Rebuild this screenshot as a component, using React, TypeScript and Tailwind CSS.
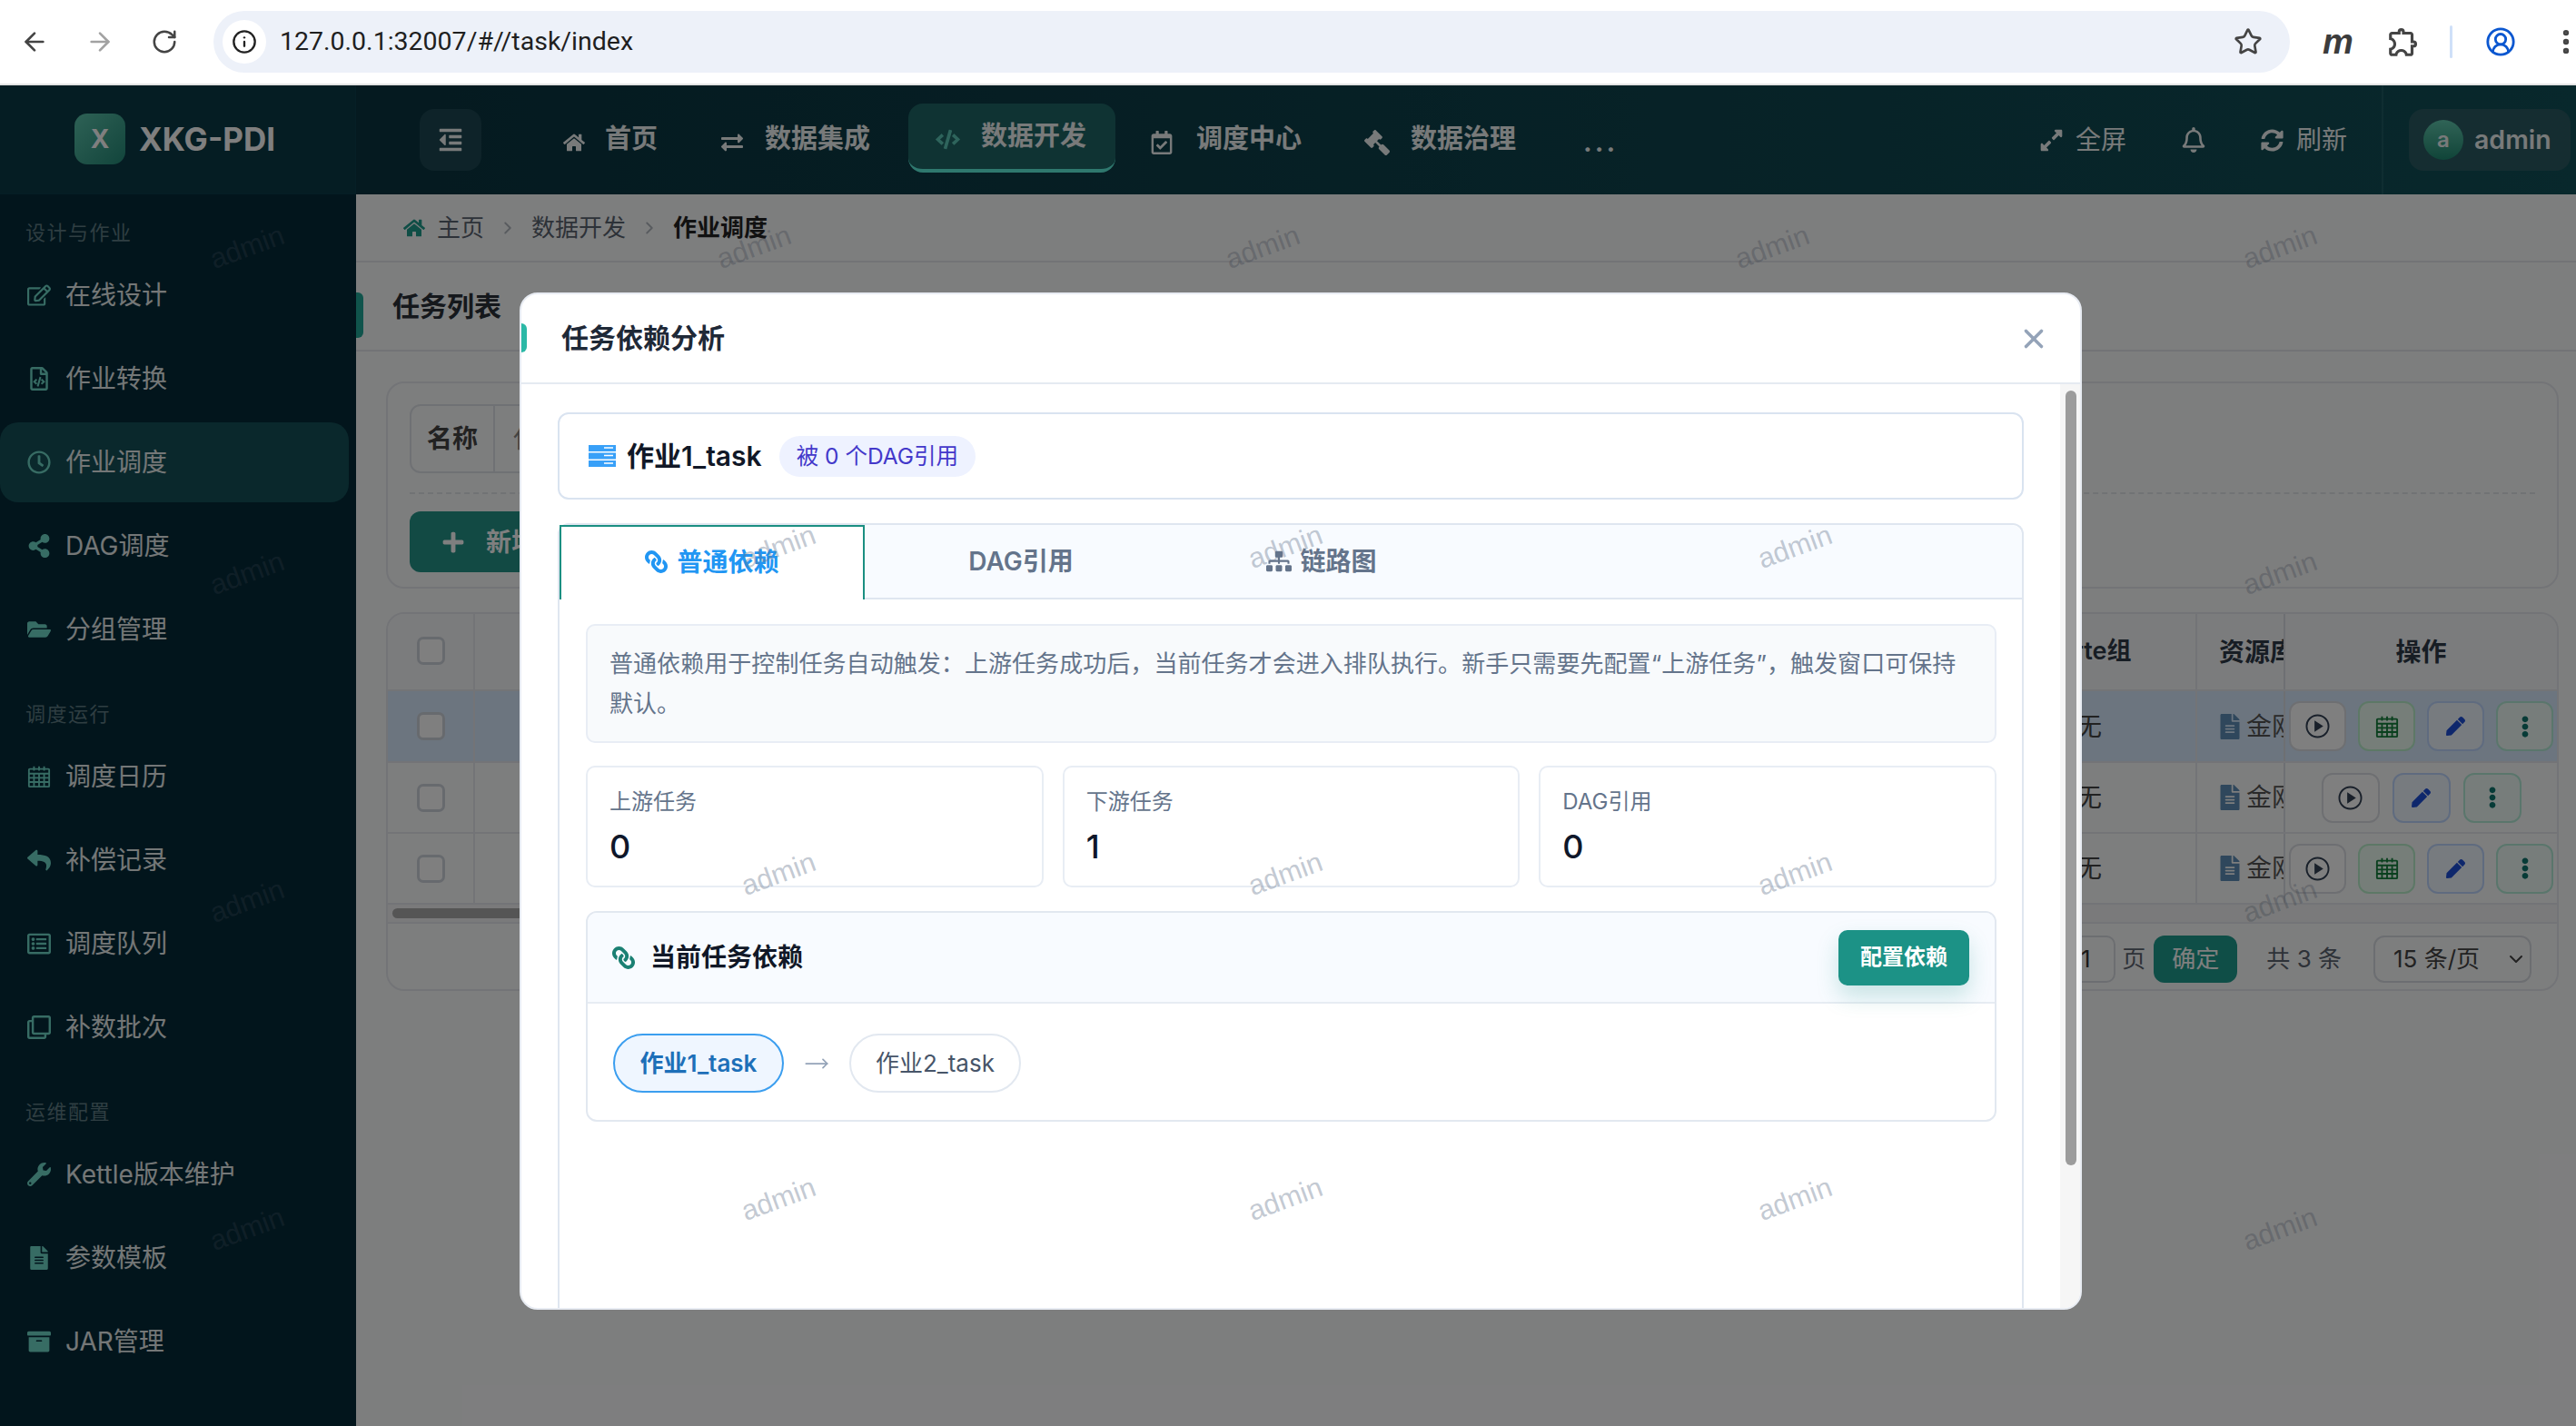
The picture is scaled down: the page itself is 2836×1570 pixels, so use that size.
import { ArrowLeft, ArrowRight, RotateCw, Info, Star, CircleUserRound, EllipsisVertical, X, ChevronDown, ChevronRight, MoveRight } from "lucide-react";
import { MdOutlineExtension } from "react-icons/md";
import {
  FaHome, FaExchangeAlt, FaCode, FaRegCalendarCheck, FaGavel, FaExpandAlt, FaRegBell, FaSyncAlt, FaOutdent,
  FaRegEdit, FaRegFileCode, FaRegClock, FaShareAlt, FaFolderOpen, FaReply, FaRegListAlt, FaRegClone, FaWrench,
  FaFileAlt, FaArchive, FaLink, FaSitemap, FaPen, FaEllipsisV, FaPlus,
} from "react-icons/fa";

const pageMarks = [272, 631, 992, 1353].flatMap((y) => [272, 830, 1390, 1951, 2510].map((x) => ({ x, y: y - 94 })));
const modalMarks = [278, 638, 996].flatMap((y) => [283, 841, 1402].map((x) => ({ x, y })));

function CalendarGrid({ className }: { className?: string }) {
  return (
    <svg viewBox="0 0 28 28" className={className} fill="none" stroke="currentColor" strokeWidth="2">
      <rect x="2" y="5" width="24" height="21" rx="1" />
      <path d="M2 10.5h24M2 15.5h24M2 20.5h24M8 10.5V26M14 10.5V26M20 10.5V26M8 2v5M14 2v5M20 2v5" />
    </svg>
  );
}

function PlayCircle({ className }: { className?: string }) {
  return (
    <svg viewBox="0 0 28 28" className={className}>
      <circle cx="14" cy="14" r="12.500" fill="none" stroke="currentColor" strokeWidth="2" />
      <path d="M10.500 7.500 20.500 14 10.500 20.500z" fill="currentColor" />
    </svg>
  );
}

function Watermark({ x, y, tone }: { x: number; y: number; tone: string }) {
  return (
    <span
      className={`absolute -translate-x-1/2 -translate-y-1/2 -rotate-[20deg] text-[31px] leading-none pointer-events-none select-none [font-family:'Liberation_Sans',sans-serif] ${tone}`}
      style={{ left: x, top: y }}
    >
      admin
    </span>
  );
}

function BrowserBar() {
  return (
    <div className="h-[94px] shrink-0 flex items-center bg-white border-b-2 border-[#e4e4e4] text-[#444] relative">
      <ArrowLeft className="ml-[22px] w-[32px] h-[32px] shrink-0" strokeWidth={2} />
      <ArrowRight className="ml-[40px] w-[32px] h-[32px] shrink-0 text-[#a2a2a2]" strokeWidth={2} />
      <RotateCw className="ml-[40px] w-[30px] h-[30px] shrink-0" strokeWidth={2} />
      <div className="ml-[39px] w-[2286px] h-[68px] shrink-0 rounded-full bg-[#edf1f9] flex items-center pl-[10px] pr-[30px]">
        <div className="w-[48px] h-[48px] rounded-full bg-white flex items-center justify-center">
          <Info className="w-[28px] h-[28px] text-[#222]" strokeWidth={2} />
        </div>
        <span className="ml-[15px] text-[28.5px] text-[#1f1f1f] [font-family:Roboto,sans-serif]">127.0.0.1:32007/#//task/index</span>
        <Star className="ml-auto w-[32px] h-[32px]" strokeWidth={2} />
      </div>
      <span className="ml-[36px] text-[38px] font-bold italic leading-none text-[#3c3c3c] [font-family:'Liberation_Sans',sans-serif]">m</span>
      <MdOutlineExtension className="ml-[36px] w-[38px] h-[38px] shrink-0" />
      <div className="ml-[32px] w-[3px] h-[36px] shrink-0 rounded bg-[#cfe0f8]" />
      <CircleUserRound className="ml-[36px] w-[34px] h-[34px] shrink-0 text-[#0b57d0]" strokeWidth={2} />
      <EllipsisVertical className="ml-[38px] w-[34px] h-[34px] shrink-0" strokeWidth={2.5} />
    </div>
  );
}

const menu = [
  { label: "设计与作业" },
  { label: "在线设计", icon: FaRegEdit },
  { label: "作业转换", icon: FaRegFileCode },
  { label: "作业调度", icon: FaRegClock, active: true },
  { label: "DAG调度", icon: FaShareAlt },
  { label: "分组管理", icon: FaFolderOpen },
  { label: "调度运行" },
  { label: "调度日历", icon: CalendarGrid },
  { label: "补偿记录", icon: FaReply },
  { label: "调度队列", icon: FaRegListAlt },
  { label: "补数批次", icon: FaRegClone },
  { label: "运维配置" },
  { label: "Kettle版本维护", icon: FaWrench },
  { label: "参数模板", icon: FaFileAlt },
  { label: "JAR管理", icon: FaArchive },
];

function Sidebar() {
  return (
    <aside className="w-[392px] shrink-0 bg-[#042a38] flex flex-col">
      <div className="h-[120px] shrink-0 flex items-center pl-[82px] border-b-2 border-[#0a3b48] border-r border-r-[#0d3f4c] bg-[#0a3a46]">
        <div className="w-[56px] h-[56px] rounded-[14px] bg-gradient-to-br from-[#5cc4ac] to-[#238a78] flex items-center justify-center text-white text-[28px] font-bold">X</div>
        <span className="ml-[15px] text-[35px] font-bold text-white">XKG-PDI</span>
      </div>
      <nav className="pt-[14px] flex flex-col">
        {menu.map((m) =>
          m.icon ? (
            <div
              key={m.label}
              className={`h-[88px] mb-[4px] mr-[8px] rounded-[20px] flex items-center pl-[30px] text-[28px] text-[#e8eeee] ${m.active ? "bg-[#145058]" : ""}`}
            >
              <m.icon className="w-[26px] h-[26px] shrink-0 text-[#6fd8c8]" />
              <span className="ml-[16px]">{m.label}</span>
            </div>
          ) : (
            <div
              key={m.label}
              className={`pl-[28px] text-[22px] tracking-[1.5px] text-[#5f7c84] h-[40px] flex items-center mb-[5px] ${m.label === "设计与作业" ? "mt-[8px]" : "mt-[25px]"}`}
            >
              {m.label}
            </div>
          ),
        )}
      </nav>
    </aside>
  );
}

function Header() {
  return (
    <header className="h-[120px] shrink-0 flex items-center bg-gradient-to-r from-[#0a3440] to-[#115058] pl-[70px] text-[#f0f4f4] text-[29px] font-semibold">
      <div className="w-[68px] h-[68px] rounded-[16px] bg-[#1d4752] flex items-center justify-center">
        <FaOutdent className="w-[28px] h-[28px]" />
      </div>
      <div className="ml-[90px] -mt-[2px] flex items-center">
        <FaHome className="w-[24px] h-[24px] mt-[8px] mr-[22px]" />
        首页
      </div>
      <div className="ml-[70px] -mt-[2px] flex items-center">
        <FaExchangeAlt className="w-[24px] h-[24px] mt-[8px] mr-[24px]" />
        数据集成
      </div>
      <div className="ml-[42px] w-[228px] h-[76px] -mt-[4px] rounded-[16px] bg-[#1e6666] border-b-4 border-[#5ef0dd] flex items-center pl-[30px]">
        <FaCode className="w-[27px] h-[27px] mt-[6px] mr-[23px] text-[#5cc8b8]" />
        数据开发
      </div>
      <div className="ml-[39px] -mt-[2px] flex items-center">
        <FaRegCalendarCheck className="w-[24px] h-[26px] mt-[8px] mr-[26px]" />
        调度中心
      </div>
      <div className="ml-[69px] -mt-[2px] flex items-center">
        <FaGavel className="w-[28px] h-[28px] mt-[8px] mr-[23px] -scale-x-100" />
        数据治理
      </div>
      <span className="ml-[74px] mt-[6px] font-bold tracking-[3px]">...</span>
      <div className="ml-auto flex items-center h-full font-normal text-[28px]">
        <FaExpandAlt className="w-[27px] h-[27px] mr-[13px]" />
        全屏
        <FaRegBell className="ml-[60px] w-[28px] h-[28px]" />
        <FaSyncAlt className="ml-[60px] w-[25px] h-[25px] mr-[14px]" />
        刷新
        <div className="ml-[38px] h-full border-l-2 border-[#1e5a62] pl-[28px] pr-[6px] flex items-center">
          <div className="w-[178px] h-[68px] rounded-[16px] bg-[#2a5a62] flex items-center pl-[16px]">
            <div className="w-[44px] h-[44px] rounded-full bg-gradient-to-b from-[#60c8ae] to-[#1f8a72] flex items-center justify-center text-[24px] font-semibold">a</div>
            <span className="ml-[12px] text-[28.5px] font-semibold">admin</span>
          </div>
        </div>
      </div>
    </header>
  );
}

function TableRow({ selected, calendar, wide, h }: { selected?: boolean; calendar?: boolean; wide?: boolean; h: string }) {
  const size = wide ? "w-[64px]" : "w-[63px]";
  return (
    <div className={`${h} flex border-b-2 border-[#e6e9ee] ${selected ? "bg-[#d8ebff]" : ""}`}>
      <div className="w-[96px] shrink-0 border-r-2 border-[#e6e9ee] flex items-center justify-center">
        <div className="w-[31px] h-[31px] rounded-[7px] border-[3px] border-[#cfd4dc] bg-white" />
      </div>
      <div className="flex-1" />
      <div className="w-[234px] shrink-0 flex items-center justify-center text-[28px] text-[#444]">无</div>
      <div className="w-[97px] shrink-0 border-l-2 border-[#e6e9ee] flex items-center pl-[24px] overflow-hidden text-[28px] text-[#555] whitespace-nowrap">
        <FaFileAlt className="w-[24px] h-[28px] shrink-0 text-[#5f8fb8] mr-[6px]" />
        金刚
      </div>
      <div className={`w-[301px] shrink-0 border-l-2 border-[#dde1e6] flex items-center justify-center ${wide ? "gap-[14px]" : "gap-[13px]"}`}>
        <button className={`${size} h-[55px] rounded-[12px] border-2 border-[#dcdfe4] bg-white flex items-center justify-center text-[#334155]`}>
          <PlayCircle className="w-[27px] h-[27px]" />
        </button>
        {calendar && (
          <button className={`${size} h-[55px] rounded-[12px] border-2 border-[#bbf0cc] bg-[#ecfdf3] flex items-center justify-center text-[#15803d]`}>
            <CalendarGrid className="w-[26px] h-[26px]" />
          </button>
        )}
        <button className={`${size} h-[55px] rounded-[12px] border-2 border-[#bfd7fe] bg-[#eff6ff] flex items-center justify-center text-[#1d4ed8]`}>
          <FaPen className="w-[21px] h-[21px]" />
        </button>
        <button className={`${size} h-[55px] rounded-[12px] border-2 border-[#b5ecd8] bg-[#eefbf6] flex items-center justify-center text-[#0f766e]`}>
          <FaEllipsisV className="w-[24px] h-[24px]" />
        </button>
      </div>
    </div>
  );
}

function TaskPage() {
  return (
    <main className="flex-1 min-w-0 bg-[#fbfcfd] flex flex-col">
      <div className="h-[75px] shrink-0 border-b-2 border-[#e4e7ec] flex items-center pl-[52px] text-[26px] text-[#5b6470]">
        <FaHome className="w-[24px] h-[24px] text-[#1f9d8d] mr-[13px]" />
        主页
        <ChevronRight className="w-[22px] h-[22px] mx-[15px] text-[#b0b6be]" />
        数据开发
        <ChevronRight className="w-[22px] h-[22px] mx-[15px] text-[#b0b6be]" />
        <span className="font-semibold text-[#222]">作业调度</span>
      </div>
      <div className="h-[98px] shrink-0 border-b-2 border-[#e4e7ec] flex items-center relative pl-[40px] text-[30px] font-semibold text-[#2a3038]">
        <div className="absolute left-0 top-[33px] w-[8px] h-[50px] rounded-r-[6px] bg-[#20a898]" />
        任务列表
      </div>
      <div className="pt-[33px] pl-[33px] pr-[19px] flex flex-col gap-[26px]">
        <section className="h-[228px] rounded-[20px] border-2 border-[#e6e9ee] px-[24px] pt-[23px]">
          <div className="h-[76px] w-[420px] rounded-[12px] border-2 border-[#dfe3e8] flex items-center text-[28px] font-semibold text-[#444]">
            <span className="w-[92px] h-full flex items-center justify-center border-r-2 border-[#dfe3e8]">名称</span>
            <span className="ml-[20px] font-normal text-[#888]">任务名称</span>
          </div>
          <div className="mt-[21px] border-t-2 border-dashed border-[#e3e6ea]" />
          <div className="mt-[19px] w-[220px] h-[67px] rounded-[12px] bg-[#249488] flex items-center pl-[35px] text-[28px] font-semibold text-white">
            <FaPlus className="w-[26px] h-[26px] mr-[23px]" />
            新增
          </div>
        </section>
        <section className="h-[417px] rounded-[20px] border-2 border-[#e6e9ee] overflow-hidden flex flex-col">
          <div className="h-[85px] shrink-0 flex border-b-2 border-[#e6e9ee] bg-[#f7f8fa] text-[28px] font-semibold text-[#2f3a48]">
            <div className="w-[96px] shrink-0 border-r-2 border-[#e6e9ee] flex items-center justify-center">
              <div className="w-[31px] h-[31px] rounded-[7px] border-[3px] border-[#cfd4dc] bg-white -mt-[3px]" />
            </div>
            <div className="flex-1" />
            <div className="w-[234px] shrink-0 pr-[6px] flex items-center justify-center text-[27px]">Carte组</div>
            <div className="w-[97px] shrink-0 border-l-2 border-[#e6e9ee] flex items-center pl-[24px] overflow-hidden whitespace-nowrap">资源库</div>
            <div className="w-[301px] shrink-0 border-l-2 border-[#dde1e6] flex items-center justify-center">操作</div>
          </div>
          <TableRow selected calendar h="h-[79px]" />
          <TableRow wide h="h-[78px]" />
          <TableRow calendar h="h-[78px]" />
          <div className="h-[21px] shrink-0 flex items-center pl-[5px] bg-[#f4f5f6] border-b-2 border-[#e6e9ee]">
            <div className="w-[400px] h-[11px] rounded-full bg-[#aaa]" />
          </div>
          <div className="flex-1 flex items-center justify-end pt-[5px] pr-[28px] text-[26px] text-[#5c6470]">
            <div className="w-[66px] h-[52px] rounded-[10px] border-2 border-[#d8dce2] flex items-center justify-center text-[#333]">1</div>
            <span className="ml-[7px]">页</span>
            <div className="ml-[9px] w-[92px] h-[52px] rounded-[12px] bg-[#1f9c8e] flex items-center justify-center text-white">确定</div>
            <span className="ml-[32px]">共 3 条</span>
            <div className="ml-[35px] w-[174px] h-[52px] rounded-[12px] border-2 border-[#d8dce2] flex items-center pl-[20px] text-[#444]">
              15 条/页
              <ChevronDown className="ml-auto mr-[3px] w-[24px] h-[24px]" />
            </div>
          </div>
        </section>
      </div>
    </main>
  );
}

function StatCard({ label, value }: { label: string; value: number }) {
  return (
    <div className="h-[134px] rounded-[10px] border-2 border-[#e8edf4] bg-white pl-[24px] pt-[22px]">
      <div className="text-[24px] leading-[32px] text-[#64748b]">{label}</div>
      <div className="mt-[11px] text-[36px] leading-[44px] font-medium text-[#0f172a]">{value}</div>
    </div>
  );
}

function DependencyModal() {
  return (
    <div className="absolute left-[572px] top-[228px] w-[1720px] h-[1120px] rounded-[20px] bg-white border-2 border-[#e8ecf3] overflow-hidden flex flex-col">
      <div className="h-[99px] shrink-0 border-b-2 border-[#e5eaf1] flex items-center relative pl-[44px] pr-[34px]">
        <div className="absolute left-[-2px] top-[32px] w-[8px] h-[32px] rounded-r-[6px] bg-[#2bb8a6]" />
        <span className="text-[30px] font-semibold text-[#1f2937]">任务依赖分析</span>
        <X className="ml-auto w-[34px] h-[34px] text-[#94a3b8]" strokeWidth={2.5} />
      </div>
      <div className="flex-1 min-h-0 flex">
        <div className="flex-1 min-w-0 pl-[40px] pr-[40px] pt-[31px]">
          <div className="h-[96px] rounded-[12px] border-2 border-[#d9e3f0] flex items-center pl-[32px]">
            <svg viewBox="0 0 30 24" className="w-[30px] h-[24px]">
              <path d="M0 0h30v7H0zM0 8.500h30v7H0zM0 17h30v7H0z" fill="#38a0f8" />
              <path d="M17 3h10M17 11.500h10M17 20h10" stroke="#fff" strokeWidth="1.5" />
            </svg>
            <span className="ml-[12px] text-[30px] font-semibold text-[#111827]">作业1_task</span>
            <span className="ml-[19px] h-[45px] px-[19px] rounded-full bg-[#eef2ff] text-[#4338ca] text-[24.5px] flex items-center">被 0 个DAG引用</span>
          </div>
          <div className="mt-[26px] rounded-t-[12px] border-2 border-b-0 border-[#dfe6f0] h-[900px]">
            <div className="h-[82px] flex bg-[#f8fbff] border-b-2 border-[#dfe6f0] rounded-t-[12px] text-[28px] font-semibold text-[#64748b]">
              <div className="w-[336px] h-[82px] pb-[3px] bg-white border-2 border-b-0 border-[#1b8f82] flex items-center justify-center text-[#2196f3]">
                <FaLink className="w-[25px] h-[25px] mr-[10px] -scale-x-100" />
                普通依赖
              </div>
              <div className="w-[344px] flex items-center justify-center">DAG引用</div>
              <div className="w-[318px] flex items-center justify-center">
                <FaSitemap className="w-[28px] h-[28px] mr-[9px]" />
                链路图
              </div>
            </div>
            <div className="pt-[27px] pl-[29px] pr-[28px]">
              <div className="h-[131px] rounded-[10px] border-2 border-[#e8edf5] bg-[#f8fafc] pl-[24px] pr-[24px] pt-[20px] text-[26px] leading-[44px] tracking-[0.06px] text-[#64748b]">
                普通依赖用于控制任务自动触发：上游任务成功后，当前任务才会进入排队执行。新手只需要先配置“上游任务”，触发窗口可保持默认。
              </div>
              <div className="mt-[25px] grid grid-cols-3 gap-[21px]">
                <StatCard label="上游任务" value={0} />
                <StatCard label="下游任务" value={1} />
                <StatCard label="DAG引用" value={0} />
              </div>
              <div className="mt-[26px] h-[232px] rounded-[12px] border-2 border-[#e2e8f0] overflow-hidden">
                <div className="h-[100px] border-b-2 border-[#e7ecf3] bg-[#f8fbff] flex items-center pl-[27px] pr-[28px]">
                  <FaLink className="w-[25px] h-[25px] -scale-x-100 text-[#1b8073]" />
                  <span className="ml-[17px] text-[28px] font-semibold text-[#111827]">当前任务依赖</span>
                  <button className="ml-auto w-[144px] h-[61px] rounded-[10px] bg-[#1c9286] text-white text-[24px] font-bold shadow-[0_12px_24px_rgba(28,146,134,0.22)]">配置依赖</button>
                </div>
                <div className="pl-[28px] pt-[33px] flex items-center">
                  <div className="w-[188px] h-[65px] rounded-full border-2 border-[#3b9eef] bg-[#eff6ff] flex items-center justify-center text-[26px] font-semibold text-[#1d6fb8]">作业1_task</div>
                  <MoveRight className="mx-[15px] w-[42px] h-[28px] text-[#94a3b8]" strokeWidth={1.5} />
                  <div className="w-[189px] h-[65px] rounded-full border-2 border-[#e2e8f0] bg-white flex items-center justify-center text-[26px] text-[#475569]">作业2_task</div>
                </div>
              </div>
            </div>
          </div>
        </div>
        <div className="w-[22px] shrink-0 bg-[#f6f6f6] pt-[7px] pl-[6px]">
          <div className="w-[12px] h-[853px] rounded-full bg-[#9c9c9c]" />
        </div>
      </div>
      {modalMarks.map((m) => (
        <Watermark key={`${m.x}-${m.y}`} x={m.x} y={m.y} tone="text-[#64748b]/40" />
      ))}
    </div>
  );
}

export default function App() {
  return (
    <div className="w-[2836px] h-[1570px] overflow-hidden flex flex-col bg-white [font-family:Inter,'Noto_Sans_CJK_SC',sans-serif]">
      <BrowserBar />
      <div className="relative flex-1 min-h-0 flex">
        <Sidebar />
        <div className="flex-1 min-w-0 flex flex-col">
          <Header />
          <TaskPage />
        </div>
        {pageMarks.map((m) => (
          <Watermark key={`${m.x}-${m.y}`} x={m.x} y={m.y} tone="text-[#64748b]/30" />
        ))}
        {/* dialog backdrop */}
        <div className="absolute inset-0 bg-black/50" />
        <DependencyModal />
      </div>
    </div>
  );
}
